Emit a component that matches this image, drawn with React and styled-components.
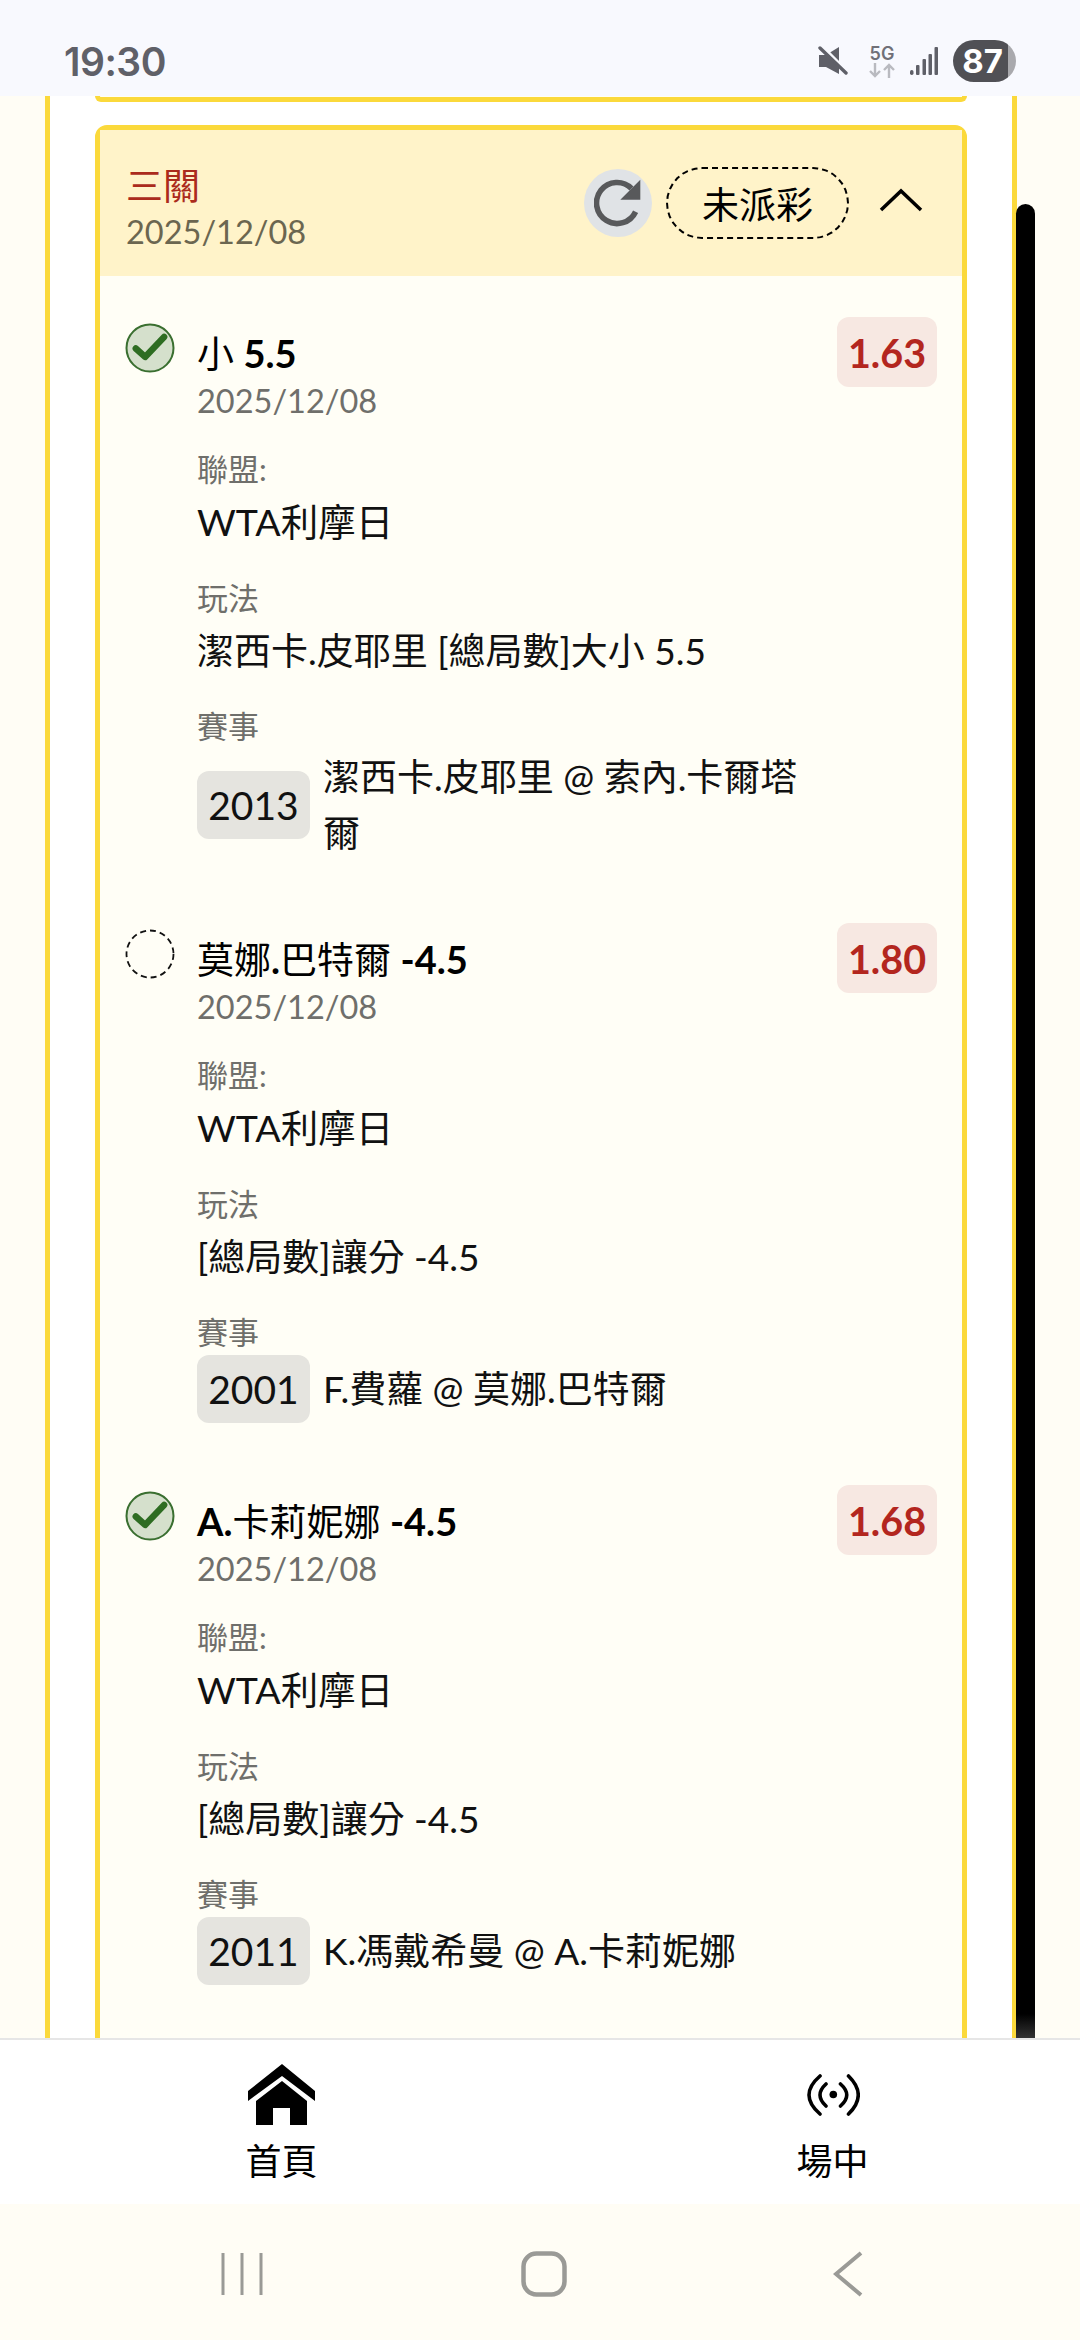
import React from 'react'
import styled, { createGlobalStyle } from 'styled-components'

const GlobalStyle = createGlobalStyle`
  html, body {
    margin: 0;
    padding: 0;
    background: #fffdf5;
  }
  * {
    box-sizing: border-box;
  }
`
const Screen = styled.div`
  width: 1080px;
  height: 2340px;
  display: flex;
  flex-direction: column;
  overflow: hidden;
  background: #fffdf5;
  font-family: Lato, "Noto Sans CJK TC", sans-serif;
  color: #000;
`
const StatusBar = styled.div`
  height: 96px;
  flex: none;
  display: flex;
  align-items: center;
  justify-content: space-between;
  padding: 26px 64px 0 64px;
  background: #f8f9fe;
`
const Clock = styled.div`
  font-family: Inter, sans-serif;
  font-size: 39px;
  font-weight: 600;
  letter-spacing: -0.5px;
  color: #5f6068;
`
const StatusIcons = styled.div`
  display: flex;
  align-items: center;
`
const NetBlock = styled.div`
  width: 28px;
  margin: 0 14px 0 20px;
  display: flex;
  flex-direction: column;
  align-items: center;
`
const NetLabel = styled.div`
  font-family: Inter, sans-serif;
  font-size: 18px;
  line-height: 18px;
  font-weight: 600;
  color: #707078;
`
const Battery = styled.div`
  width: 63px;
  height: 42px;
  margin-left: 15px;
  border-radius: 21px;
  display: flex;
  align-items: center;
  justify-content: center;
  padding-right: 4px;
  background: linear-gradient(90deg, #505055 0, #505055 55px, #a9a9ad 55px);
  font-family: Inter, sans-serif;
  font-size: 33px;
  font-weight: 700;
  color: #fff;
`
const Content = styled.div`
  position: relative;
  height: 1942px;
  flex: none;
  overflow: hidden;
`
const Panel = styled.div`
  width: 972px;
  height: 100%;
  margin-left: 45px;
  padding: 0 45px;
  overflow: hidden;
  background: #fff;
  border-left: 5px solid #fbd93b;
  border-right: 5px solid #fbd93b;
`
const PrevCardEdge = styled.div`
  height: 6px;
  border: 5px solid #fbd93b;
  border-top: 0;
  border-radius: 0 0 10px 10px;
  background: #fffef6;
`
const Card = styled.div`
  margin-top: 23px;
  border: 5px solid #fbd93b;
  border-radius: 12px;
  background: #fffef6;
`
const CardHeader = styled.div`
  height: 146px;
  display: flex;
  align-items: center;
  padding: 0 26px;
  background: #fff3c9;
`
const HeaderText = styled.div`
  flex: 1;
  padding-top: 7px;
`
const CardTitle = styled.div`
  font-size: 37px;
  line-height: 50px;
  color: #ab2b1c;
`
const CardDate = styled.div`
  font-size: 32.5px;
  line-height: 42px;
  color: #6b6650;
`
const RefreshButton = styled.div`
  width: 68px;
  height: 68px;
  border-radius: 50%;
  display: flex;
  align-items: center;
  justify-content: center;
  background: #e0e3e6;
`
const StatusPill = styled.div`
  width: 183px;
  height: 72px;
  margin-left: 14px;
  border: 2px dashed #000;
  border-radius: 36px;
  display: flex;
  align-items: center;
  justify-content: center;
  font-size: 37px;
`
const Collapse = styled.div`
  width: 44px;
  margin: 0 13px 7px 30px;
  display: flex;
`
const Legs = styled.div`
  padding: 41px 24px 0 25px;
`
const Leg = styled.div`
  display: grid;
  grid-template-columns: 48px 628px 100px;
  column-gap: 24px;
  margin-bottom: 62px;
  & > :last-child {
    margin-left: -12px;
  }
`
const CheckSlot = styled.div`
  margin-top: 6px;
  height: 50px;
`
const LegTitle = styled.div`
  margin-top: 11px;
  font-size: 37px;
  line-height: 50px;
`
const Strong = styled.span`
  font-size: 38px;
  font-weight: 700;
`
const LegDate = styled.div`
  font-size: 32.5px;
  line-height: 44px;
  color: #6f6f6b;
  margin-bottom: 23px;
`
const Field = styled.div`
  margin-bottom: 23.5px;
`
const FieldLabel = styled.div`
  font-size: 31px;
  line-height: 46px;
  color: #6f6f6b;
`
const FieldValue = styled.div`
  font-size: 37.5px;
  line-height: 59px;
  color: #111;
`
const PlayValue = styled(FieldValue)`
  font-size: 37px;
`
const EventRow = styled.div`
  display: flex;
  align-items: center;
  font-size: 37px;
  line-height: 56px;
  color: #111;
`
const EventNo = styled.div`
  flex: none;
  width: 113px;
  height: 68px;
  margin-right: 13px;
  border-radius: 12px;
  display: flex;
  align-items: center;
  justify-content: center;
  background: #e5e4df;
  font-size: 39px;
`
const EventName = styled.div`
  flex: 1;
`
const Odds = styled.div`
  width: 100px;
  height: 70px;
  border-radius: 12px;
  display: flex;
  align-items: center;
  justify-content: center;
  background: #f7e8e2;
  color: #b3261e;
  font-size: 39.5px;
  font-weight: 700;
`
const Scrollbar = styled.div`
  position: absolute;
  top: 108px;
  bottom: 0;
  left: 1016px;
  width: 19px;
  border-radius: 10px 10px 0 0;
  background: linear-gradient(180deg, #000 0, #000 calc(100% - 24px), #333 100%);
`
const TabBar = styled.div`
  height: 166px;
  flex: none;
  display: grid;
  grid-template-columns: 563px 1fr;
  border-top: 2px solid #e6e6e6;
  background: #fff;
`
const Tab = styled.div`
  display: flex;
  flex-direction: column;
  align-items: center;
  padding-top: 24px;
  padding-left: ${({ $offset }) => $offset}px;
`
const TabIcon = styled.div`
  height: 62px;
  display: flex;
  align-items: center;
`
const TabLabel = styled.div`
  margin-top: 9px;
  font-size: 36px;
  line-height: 52px;
`
const NavBar = styled.div`
  height: 136px;
  flex: none;
  display: flex;
  align-items: center;
  background: #fffdf5;
  padding-left: 221px;
  padding-top: 4px;
`
const NavSlot = styled.div`
  width: ${({ $w }) => $w}px;
  display: flex;
`

function CheckIcon({ done }) {
  if (!done) {
    return (
      <svg width="50" height="50" viewBox="0 0 50 50">
        <circle cx="25" cy="25" r="23.5" fill="none" stroke="#111" strokeWidth="1.8" strokeDasharray="6 4" />
      </svg>
    )
  }
  return (
    <svg width="50" height="50" viewBox="0 0 50 50">
      <circle cx="25" cy="25" r="23.5" fill="#d5e0cc" stroke="#3a6f30" strokeWidth="2" />
      <path d="M10.8 25.5 L20.1 33.9 L39.1 13.9" fill="none" stroke="#2e6d22" strokeWidth="6.5" strokeLinejoin="round" strokeLinecap="round" />
    </svg>
  )
}

function RefreshIcon() {
  return (
    <svg width="48" height="48" viewBox="18.7 16 48 48">
      <path d="M60.3 48.7 A20.5 20.5 0 1 1 56.2 25.5" fill="none" stroke="#58595b" strokeWidth="5.6" />
      <path d="M65 16.7 V36.7 H45 Z" fill="#58595b" />
    </svg>
  )
}

function HomeIcon() {
  return (
    <svg width="68" height="62" viewBox="0 0 68 62">
      <path d="M34 0 L67 27 V37 L34 12 L0 37 V27 Z" fill="#000" />
      <path d="M34 17 L59 37 V61 H42 V44 H25 V61 H8 V37 Z" fill="#000" />
    </svg>
  )
}

function LiveIcon() {
  return (
    <svg width="54" height="46" viewBox="15 13 54 46">
      <circle cx="42.3" cy="35.5" r="3.8" fill="#000" />
      <path d="M35 25 Q23 36 35 47 M49.5 25 Q62 36 49.5 47 M29 17 Q7 36 29 55 M57.5 17 Q77 36 57.5 55" fill="none" stroke="#000" strokeWidth="3.6" strokeLinecap="round" />
    </svg>
  )
}

function MuteIcon() {
  return (
    <svg width="30" height="30" viewBox="0 0 30 30">
      <path d="M1 9 H8 L21 1 V28 L8 21 H1 Z" fill="#5f6068" />
      <path d="M5 1 L30 26" stroke="#f8f9fe" strokeWidth="3" />
      <path d="M2 2 L28 27" stroke="#5f6068" strokeWidth="3.4" strokeLinecap="round" />
    </svg>
  )
}

function SignalIcon() {
  return (
    <svg width="28" height="30" viewBox="0 0 28 30">
      <rect x="0" y="24" width="3.5" height="5" rx="1.7" fill="#5f6068" />
      <rect x="6" y="19" width="3.5" height="10" rx="1" fill="#5f6068" />
      <rect x="12.5" y="13" width="3.5" height="16" rx="1" fill="#5f6068" />
      <rect x="18.5" y="8" width="3.5" height="21" rx="1" fill="#5f6068" />
      <rect x="24.5" y="1" width="3.5" height="28" rx="1" fill="#5f6068" />
    </svg>
  )
}

function ArrowsIcon() {
  return (
    <svg width="28" height="15" viewBox="0 0 28 15">
      <path d="M7 0 V13 M2 8 L7 13 L12 8" fill="none" stroke="#b9bac0" strokeWidth="2.4" />
      <path d="M21 15 V2 M16 7 L21 2 L26 7" fill="none" stroke="#b9bac0" strokeWidth="2.4" />
    </svg>
  )
}

const legs = [
  {
    done: true,
    title: <>小 <Strong>5.5</Strong></>,
    odds: '1.63',
    play: '潔西卡.皮耶里 [總局數]大小 5.5',
    no: '2013',
    event: '潔西卡.皮耶里 @ 索內.卡爾塔爾',
  },
  {
    done: false,
    title: <>莫娜<Strong>.</Strong>巴特爾 <Strong>-4.5</Strong></>,
    odds: '1.80',
    play: '[總局數]讓分 -4.5',
    no: '2001',
    event: 'F.費蘿 @ 莫娜.巴特爾',
  },
  {
    done: true,
    title: <><Strong>A.</Strong>卡莉妮娜 <Strong>-4.5</Strong></>,
    odds: '1.68',
    play: '[總局數]讓分 -4.5',
    no: '2011',
    event: 'K.馮戴希曼 @ A.卡莉妮娜',
  },
]

export default function App() {
  return (
    <Screen>
      <GlobalStyle />
      <StatusBar>
        <Clock>19:30</Clock>
        <StatusIcons>
          <MuteIcon />
          <NetBlock>
            <NetLabel>5G</NetLabel>
            <ArrowsIcon />
          </NetBlock>
          <SignalIcon />
          <Battery>87</Battery>
        </StatusIcons>
      </StatusBar>
      <Content>
        <Panel>
          <PrevCardEdge />
          <Card>
            <CardHeader>
              <HeaderText>
                <CardTitle>三關</CardTitle>
                <CardDate>2025/12/08</CardDate>
              </HeaderText>
              <RefreshButton><RefreshIcon /></RefreshButton>
              <StatusPill>未派彩</StatusPill>
              <Collapse>
                <svg width="44" height="24" viewBox="0 0 44 24">
                  <path d="M2 22 L22 3 L42 22" fill="none" stroke="#000" strokeWidth="3.5" />
                </svg>
              </Collapse>
            </CardHeader>
            <Legs>
              {legs.map((leg) => (
                <Leg key={leg.no}>
                  <CheckSlot><CheckIcon done={leg.done} /></CheckSlot>
                  <div>
                    <LegTitle>{leg.title}</LegTitle>
                    <LegDate>2025/12/08</LegDate>
                    <Field>
                      <FieldLabel>聯盟:</FieldLabel>
                      <FieldValue>WTA利摩日</FieldValue>
                    </Field>
                    <Field>
                      <FieldLabel>玩法</FieldLabel>
                      <PlayValue>{leg.play}</PlayValue>
                    </Field>
                    <FieldLabel>賽事</FieldLabel>
                    <EventRow>
                      <EventNo>{leg.no}</EventNo>
                      <EventName>{leg.event}</EventName>
                    </EventRow>
                  </div>
                  <div><Odds>{leg.odds}</Odds></div>
                </Leg>
              ))}
            </Legs>
          </Card>
        </Panel>
        <Scrollbar />
      </Content>
      <TabBar>
        <Tab $offset={0}>
          <TabIcon><HomeIcon /></TabIcon>
          <TabLabel>首頁</TabLabel>
        </Tab>
        <Tab $offset={22}>
          <TabIcon><LiveIcon /></TabIcon>
          <TabLabel>場中</TabLabel>
        </Tab>
      </TabBar>
      <NavBar>
        <NavSlot $w={300}>
          <svg width="42" height="44" viewBox="0 0 42 44">
            <path d="M2 1 V43 M21 1 V43 M40 1 V43" stroke="#9a9a96" strokeWidth="3" />
          </svg>
        </NavSlot>
        <NavSlot $w={312}>
          <svg width="46" height="46" viewBox="0 0 46 46">
            <rect x="2.5" y="2.5" width="41" height="41" rx="13" fill="none" stroke="#9a9a96" strokeWidth="4.5" />
          </svg>
        </NavSlot>
        <NavSlot $w={30}>
          <svg width="30" height="46" viewBox="0 0 30 46">
            <path d="M28 2 L3 23 L28 44" fill="none" stroke="#9a9a96" strokeWidth="4" />
          </svg>
        </NavSlot>
      </NavBar>
    </Screen>
  )
}
